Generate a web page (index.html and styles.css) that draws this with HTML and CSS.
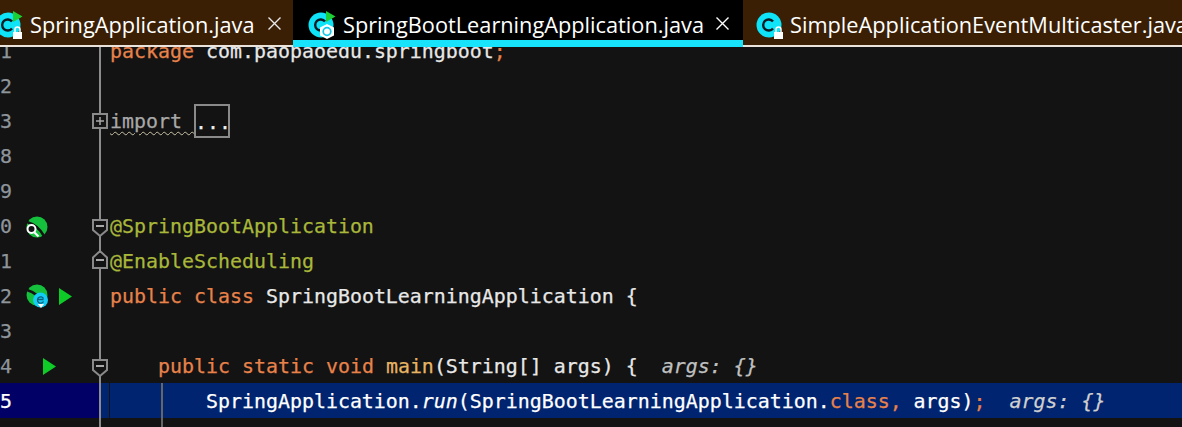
FILE: index.html
```html
<!DOCTYPE html>
<html lang="en">
<head>
<meta charset="utf-8">
<title>SpringBootLearningApplication.java</title>
<link rel="stylesheet" href="styles.css">
</head>
<body>
<svg class="defs" width="0" height="0" aria-hidden="true">
  <defs>
    <g id="class-base">
      <circle cx="13" cy="15" r="12.5" fill="#0fe3f7"/>
      <path d="M17 11.600A5.500 5.500 0 1 0 17 18.400" fill="none" stroke="#0c1a22" stroke-width="2.400"/>
    </g>
    <g id="lock">
      <rect x="18" y="22" width="9" height="7" fill="#fff"/>
      <path d="M20 22v-2.500a2.500 2.500 0 0 1 5 0V22" fill="none" stroke="#fff" stroke-width="1.500"/>
    </g>
    <path id="run-tri" d="M18 1l9.500 5.500L18 12z" fill="#1ccf35"/>
    <g id="bean">
      <circle cx="11" cy="11" r="10.500" fill="#14c03c"/>
      <path d="M1 6C8 8 14 13 18 20" fill="none" stroke="#131313" stroke-width="2.600"/>
    </g>
  </defs>
</svg>
<div class="tabs">
  <div class="tab tab-first">
    <svg class="tab-icon" width="30" height="30" viewBox="0 0 30 30"><use href="#class-base"/><use href="#run-tri"/><use href="#lock"/></svg>
    <span class="tab-name">SpringApplication.java</span>
    <svg class="tab-close" width="13" height="13" viewBox="0 0 13 13"><path d="M.5.5l12 12M12.500.5l-12 12" stroke="#e8e8e8" stroke-width="1.400"/></svg>
  </div>
  <div class="tab tab-active">
    <svg class="tab-icon" width="30" height="30" viewBox="0 0 30 30"><use href="#class-base"/><use href="#run-tri"/>
      <path d="M19 14l7 3.500v8L19 29l-7-3.500v-8z" fill="#fff"/><circle cx="19" cy="21.500" r="3.800" fill="none" stroke="#0fc8ee" stroke-width="1.700"/></svg>
    <span class="tab-name">SpringBootLearningApplication.java</span>
    <svg class="tab-close" width="13" height="13" viewBox="0 0 13 13"><path d="M.5.5l12 12M12.500.5l-12 12" stroke="#fff" stroke-width="1.400"/></svg>
  </div>
  <div class="tab tab-last">
    <svg class="tab-icon" width="30" height="30" viewBox="0 0 30 30"><use href="#class-base"/><use href="#lock"/></svg>
    <span class="tab-name">SimpleApplicationEventMulticaster.java</span>
  </div>
</div>
<div class="editor">
  <div class="lines">
    <div class="row"><div class="gutter"><span class="num">1</span></div><div class="code"><span class="kw">package</span> com.paopaoedu.springboot<span class="kw">;</span></div></div>
    <div class="row"><div class="gutter"><span class="num">2</span></div><div class="code"></div></div>
    <div class="row"><div class="gutter"><span class="num">3</span>
      <svg class="fold fold-box" width="18" height="18" viewBox="0 0 18 18"><rect x="2" y="2" width="14" height="14" fill="#131313" stroke="#8a8a8a" stroke-width="2"/><path d="M5 9h8M9 5v8" stroke="#a8a8a8" stroke-width="1.500"/></svg>
    </div><div class="code"><span class="unused">import </span><span class="folded">...</span></div></div>
    <div class="row"><div class="gutter"><span class="num">8</span></div><div class="code"></div></div>
    <div class="row"><div class="gutter"><span class="num">9</span></div><div class="code"></div></div>
    <div class="row"><div class="gutter"><span class="num">0</span>
      <svg class="mark mark-search" width="24" height="24" viewBox="0 0 24 24"><use href="#bean"/><circle cx="5.500" cy="13" r="4" fill="#131313" stroke="#fff" stroke-width="2"/><path d="M8.500 16.500l4 4" stroke="#fff" stroke-width="2.200"/></svg>
      <svg class="fold fold-down" width="18" height="21" viewBox="0 0 18 21"><path d="M2 2h14v10l-7 6-7-6z" fill="#131313" stroke="#8a8a8a" stroke-width="2"/><path d="M5 8h8" stroke="#a8a8a8" stroke-width="2"/></svg>
    </div><div class="code"><span class="ann">@SpringBootApplication</span></div></div>
    <div class="row"><div class="gutter"><span class="num">1</span>
      <svg class="fold fold-up" width="18" height="21" viewBox="0 0 18 21"><path d="M2 19h14V8.500L9 2 2 8.500z" fill="#131313" stroke="#8a8a8a" stroke-width="2"/><path d="M5 11h8" stroke="#a8a8a8" stroke-width="2"/></svg>
    </div><div class="code"><span class="ann">@EnableScheduling</span></div></div>
    <div class="row"><div class="gutter"><span class="num">2</span>
      <svg class="mark mark-event" width="24" height="24" viewBox="0 0 24 24"><use href="#bean"/><circle cx="14.500" cy="16" r="7.500" fill="#14cdf5"/><path d="M17.500 14.500a3.200 3.200 0 1 0 0 3M11.500 15.500h6" fill="none" stroke="#0d5c78" stroke-width="1.300"/><path d="M12 20h6l-3 4z" fill="#fff"/></svg>
      <svg class="run run-top" width="13" height="17" viewBox="0 0 13 17"><path d="M0 0l13 8.500L0 17z" fill="#0ecb27"/></svg>
    </div><div class="code"><span class="kw">public class</span> SpringBootLearningApplication {</div></div>
    <div class="row"><div class="gutter"><span class="num">3</span></div><div class="code"></div></div>
    <div class="row"><div class="gutter"><span class="num">4</span>
      <svg class="run run-main" width="13" height="17" viewBox="0 0 13 17"><path d="M0 0l13 8.500L0 17z" fill="#0ecb27"/></svg>
      <svg class="fold fold-down" width="18" height="21" viewBox="0 0 18 21"><path d="M2 2h14v10l-7 6-7-6z" fill="#131313" stroke="#8a8a8a" stroke-width="2"/><path d="M5 8h8" stroke="#a8a8a8" stroke-width="2"/></svg>
    </div><div class="code">    <span class="kw">public static void</span> <span class="fn">main</span>(String[] args) {  <span class="hint">args: {}</span></div></div>
    <div class="row row-current"><div class="gutter"><span class="num">5</span></div><div class="code guide">        SpringApplication.<em class="call">run</em>(SpringBootLearningApplication.<span class="kw">class,</span> args)<span class="kw">;</span>  <span class="hint">args: {}</span></div></div>
    <div class="row"><div class="gutter"></div><div class="code guide"></div></div>
  </div>
</div>
</body>
</html>
```
FILE: styles.css
```css
* { box-sizing: border-box; }
html, body { margin: 0; height: 100%; }
body {
  width: 1182px;
  height: 427px;
  overflow: hidden;
  background: #131313;
  display: flex;
  flex-direction: column;
}
.defs { position: absolute; }

.tabs {
  flex: none;
  display: flex;
  height: 47px;
  overflow: hidden;
  position: relative;
  z-index: 1;
  background: #3a1f05;
  font-family: "Open Sans", sans-serif;
  font-size: 21.750px;
  color: #fff;
}
.tab {
  flex: none;
  display: flex;
  align-items: flex-start;
  height: 47px;
  background: #3a1f05;
  border-bottom: 2px solid #e9e3dc;
}
.tab-first { width: 293px; }
.tab-first .tab-icon { margin-left: -5px; margin-right: 5px; }
.tab-active {
  width: 450px;
  padding-left: 15px;
  background: #000;
  border-bottom: 7px solid #17e4fb;
}
.tab-active .tab-icon { margin-right: 5px; }
.tab-last { flex: 1; padding-left: 13px; white-space: nowrap; }
.tab-last .tab-icon { margin-right: 4px; }
.tab-icon { flex: none; margin-top: 10px; }
.tab-name { flex: none; white-space: nowrap; line-height: 50px; }
.tab-close { flex: none; margin: 17px 14px 0 auto; }
.tab-first .tab-close { margin-right: 12px; }

.editor { flex: 1; overflow: hidden; min-height: 0; }
.lines {
  margin-top: -14px;
  font-family: "DejaVu Sans Mono", monospace;
  font-size: 19.930px;
  -webkit-text-stroke: 0.25px;
  color: #e8e8e8;
}
.row { display: flex; height: 35px; line-height: 35px; }
.gutter {
  flex: none;
  position: relative;
  width: 101px;
  border-right: 2px solid #8c8c8c;
  color: #8e959b;
}
.num { display: block; width: 12px; padding-top: 1px; }
.code { flex: 1; padding-left: 9px; padding-top: 1px; white-space: pre; }

.kw { color: #e8824a; }
.ann { color: #a9b73a; }
.fn { color: #e6b463; }
.unused {
  color: #a8a8a8;
  text-decoration: underline wavy #c8c2a6 1px;
  text-underline-offset: 3px;
}
.folded {
  display: inline-block;
  width: 36px;
  height: 34px;
  line-height: 33px;
  border: 2px solid #8a8a8a;
  vertical-align: top;
  text-indent: -1px;
  color: #f0f0f0;
}
.hint { color: #c0c0c0; font-style: italic; }
.call { font-style: italic; }

.mark { position: absolute; left: 26px; }
.mark-search { top: 8px; }
.mark-event { top: 6px; }
.fold { position: absolute; left: 91px; }
.fold-box { top: 9px; }
.fold-down { top: 10px; }
.fold-up { top: 6px; }
.run { position: absolute; top: 10px; }
.run-top { left: 59px; }
.run-main { left: 43px; }

.row-current .gutter { background: #000066; color: #fff; }
.row-current .code {
  color: #fff;
  background-color: #00246f;
}
.row-current .hint { color: #d0d0d0; }
.guide {
  background-image: linear-gradient(#666, #666);
  background-repeat: no-repeat;
  background-position: 60px 0;
  background-size: 2px 100%;
}
.row-current .guide {
  background-image: linear-gradient(#666, #666), linear-gradient(#131313, #131313);
  background-position: 60px 0, 8px 0;
  background-size: 2px 100%, 1px 100%;
}
```
